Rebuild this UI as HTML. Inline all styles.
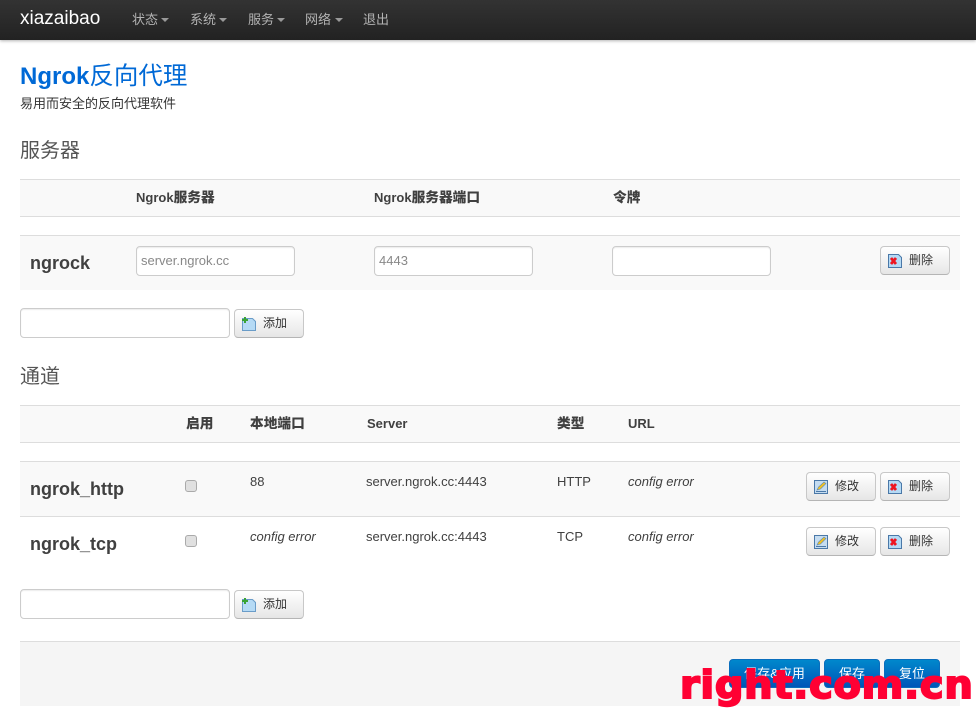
<!DOCTYPE html>
<html><head><meta charset="utf-8"><style>
html,body{margin:0;padding:0;background:#fff}
body{width:976px;height:712px;position:relative;overflow:hidden;font-family:"Liberation Sans","Noto Sans CJK SC",sans-serif;font-size:13px;color:#404040}
.a{position:absolute;white-space:nowrap}
.nav{position:absolute;left:0;top:0;width:976px;height:40px;background:linear-gradient(#333,#222);box-shadow:0 1px 3px rgba(0,0,0,.3)}
.n{position:absolute;top:12px;font-size:13px;line-height:16px;color:#b3b3b3;white-space:nowrap}
.c{position:absolute;top:18px;width:0;height:0;border-left:4px solid transparent;border-right:4px solid transparent;border-top:4px solid #999}
.bar{position:absolute;left:20px;width:940px;background:#f9f9f9}
.line{position:absolute;left:20px;width:940px;height:1px;background:#ddd}
.th{position:absolute;font-weight:bold;font-size:13px;line-height:18px;color:#404040;white-space:nowrap}
.th b{font-size:13.7px}
.h{position:absolute;left:30px;font-weight:bold;font-size:18px;line-height:22px;color:#404040;white-space:nowrap}
.i{position:absolute;box-sizing:border-box;background:#fff;border:1px solid #ccc;border-radius:4px;box-shadow:inset 0 1px 1px rgba(0,0,0,.075);font-size:13px;color:#888;padding-left:4px;line-height:28px;white-space:nowrap}
.b{position:absolute;box-sizing:border-box;height:29px;width:70px;border:1px solid #c8c8c8;border-bottom-color:#b5b5b5;border-radius:4px;background:linear-gradient(#fff,#e6e6e6);font-size:12px;line-height:26px;color:#333;white-space:nowrap;padding-left:28px}
.b svg{position:absolute;left:7px;top:7px}
.t{position:absolute;font-size:13px;line-height:18px;color:#404040;white-space:nowrap}
.e{font-style:italic}
.cb{position:absolute;box-sizing:border-box;width:12px;height:12px;border:1px solid #aaa;border-radius:3px;background:#e0e0e0}
.p{position:absolute;top:659px;height:29px;box-sizing:border-box;border:1px solid #0a6ebd;border-radius:4px;background:linear-gradient(#08c,#0055b8);color:#fff;text-align:center;font-size:13px;line-height:27px;white-space:nowrap}
</style></head><body>
<div class="nav">
<div class="a" style="left:20px;top:8px;font-size:19px;line-height:22px;color:#fff">xiazaibao</div>
<div class="n" style="left:132px">状态</div><div class="c" style="left:161px"></div>
<div class="n" style="left:190px">系统</div><div class="c" style="left:219px"></div>
<div class="n" style="left:248px">服务</div><div class="c" style="left:277px"></div>
<div class="n" style="left:305px">网络</div><div class="c" style="left:335px"></div>
<div class="n" style="left:363px">退出</div>
</div>

<div class="a" style="left:20px;top:62px;font-size:24px;line-height:30px;font-weight:bold;color:#0069d6">Ngrok<span style="font-weight:normal;font-size:24.5px">反向代理</span></div>
<div class="a" style="left:20px;top:96px;font-size:13px;line-height:16px;color:#333">易用而安全的反向代理软件</div>
<div class="a" style="left:20px;top:138px;font-size:20px;line-height:26px;color:#555">服务器</div>

<div class="bar" style="top:179px;height:38px"></div>
<div class="line" style="top:179px"></div><div class="line" style="top:216px"></div>
<div class="th" style="left:136px;top:189px">Ngrok<b>服务器</b></div>
<div class="th" style="left:374px;top:189px">Ngrok<b>服务器端口</b></div>
<div class="th" style="left:613px;top:189px"><b>令牌</b></div>

<div class="bar" style="top:235px;height:55px"></div>
<div class="line" style="top:235px"></div>
<div class="h" style="top:252px">ngrock</div>
<div class="i" style="left:136px;top:246px;width:159px;height:30px">server.ngrok.cc</div>
<div class="i" style="left:374px;top:246px;width:159px;height:30px">4443</div>
<div class="i" style="left:612px;top:246px;width:159px;height:30px"></div>
<div class="b" style="left:880px;top:246px">删除<svg width="14" height="14" viewBox="0 0 14 14"><path d="M.5.5h10l3 3v10H.5z" fill="#b5daf5" stroke="#4a78a8"/><path d="M3 4l5 6M8 4l-5 6" stroke="#ee1520" stroke-width="2.800"/></svg></div>

<div class="i" style="left:20px;top:308px;width:210px;height:30px"></div>
<div class="b" style="left:234px;top:309px">添加<svg width="14" height="14" viewBox="0 0 14 14"><path d="M.5 1.500h10l3 3v9H.5z" fill="#b5daf5" stroke="#6a9cc8"/><path d="M3 0v6M0 3h6" stroke="#3aa335" stroke-width="2"/></svg></div>

<div class="a" style="left:20px;top:364px;font-size:20px;line-height:26px;color:#555">通道</div>

<div class="bar" style="top:405px;height:38px"></div>
<div class="line" style="top:405px"></div><div class="line" style="top:442px"></div>
<div class="th" style="left:186px;top:415px"><b>启用</b></div>
<div class="th" style="left:250px;top:415px"><b>本地端口</b></div>
<div class="th" style="left:367px;top:415px">Server</div>
<div class="th" style="left:557px;top:415px"><b>类型</b></div>
<div class="th" style="left:628px;top:415px">URL</div>

<div class="bar" style="top:461px;height:55px"></div>
<div class="line" style="top:461px"></div><div class="line" style="top:516px"></div>
<div class="h" style="top:478px">ngrok_http</div>
<div class="cb" style="left:185px;top:480px"></div>
<div class="t" style="left:250px;top:473px">88</div>
<div class="t" style="left:366px;top:473px">server.ngrok.cc:4443</div>
<div class="t" style="left:557px;top:473px">HTTP</div>
<div class="t e" style="left:628px;top:473px">config error</div>
<div class="b" style="left:806px;top:472px">修改<svg width="14" height="14" viewBox="0 0 14 14"><rect x=".5" y=".5" width="13" height="13" fill="#c5dcf0" stroke="#4a78a8"/><path d="M3 10l1.500-3L10 2l2 1.500L6.500 9z" fill="#f0c020" stroke="#5a88b8" stroke-width=".6"/><path d="M2 11.500h10" stroke="#4a78a8"/></svg></div>
<div class="b" style="left:880px;top:472px">删除<svg width="14" height="14" viewBox="0 0 14 14"><path d="M.5.5h10l3 3v10H.5z" fill="#b5daf5" stroke="#4a78a8"/><path d="M3 4l5 6M8 4l-5 6" stroke="#ee1520" stroke-width="2.800"/></svg></div>

<div class="h" style="top:533px">ngrok_tcp</div>
<div class="cb" style="left:185px;top:535px"></div>
<div class="t e" style="left:250px;top:528px">config error</div>
<div class="t" style="left:366px;top:528px">server.ngrok.cc:4443</div>
<div class="t" style="left:557px;top:528px">TCP</div>
<div class="t e" style="left:628px;top:528px">config error</div>
<div class="b" style="left:806px;top:527px">修改<svg width="14" height="14" viewBox="0 0 14 14"><rect x=".5" y=".5" width="13" height="13" fill="#c5dcf0" stroke="#4a78a8"/><path d="M3 10l1.500-3L10 2l2 1.500L6.500 9z" fill="#f0c020" stroke="#5a88b8" stroke-width=".6"/><path d="M2 11.500h10" stroke="#4a78a8"/></svg></div>
<div class="b" style="left:880px;top:527px">删除<svg width="14" height="14" viewBox="0 0 14 14"><path d="M.5.5h10l3 3v10H.5z" fill="#b5daf5" stroke="#4a78a8"/><path d="M3 4l5 6M8 4l-5 6" stroke="#ee1520" stroke-width="2.800"/></svg></div>

<div class="i" style="left:20px;top:589px;width:210px;height:30px"></div>
<div class="b" style="left:234px;top:590px">添加<svg width="14" height="14" viewBox="0 0 14 14"><path d="M.5 1.500h10l3 3v9H.5z" fill="#b5daf5" stroke="#6a9cc8"/><path d="M3 0v6M0 3h6" stroke="#3aa335" stroke-width="2"/></svg></div>

<div class="a" style="left:20px;top:641px;width:940px;height:65px;background:#f5f5f5;border-top:1px solid #ddd;box-sizing:border-box"></div>
<div class="p" style="left:729px;width:91px">保存&amp;应用</div>
<div class="p" style="left:824px;width:56px">保存</div>
<div class="p" style="left:884px;width:56px">复位</div>

<div class="a" style="left:680px;top:661px;font-family:'DejaVu Sans',sans-serif;font-weight:bold;font-size:40px;letter-spacing:.7px;line-height:48px;color:#ff0033;-webkit-text-stroke:2px #ff0033;transform:scaleY(.95);transform-origin:0 78%">right.com.cn</div>
</body></html>
